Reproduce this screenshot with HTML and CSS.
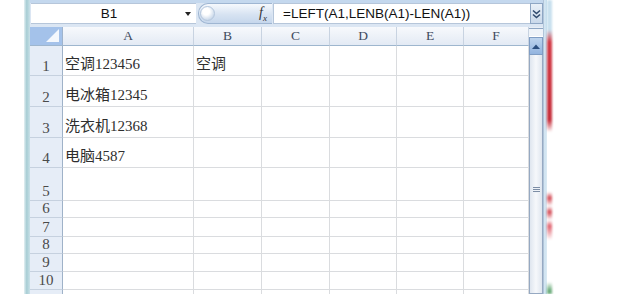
FILE: index.html
```html
<!DOCTYPE html>
<html lang="zh-CN">
<head>
  <meta charset="UTF-8">
  <title>Excel - LEFT / LENB</title>
  <link rel="stylesheet" href="styles.css">
</head>
<body>
  <div class="screen">
    <div class="window">
      <div class="frame-left"></div>
      <div class="app">
        <div class="topbar"></div>
        <div class="formula-bar">
          <div class="name-box"><span class="name">B1</span><span class="drop"></span></div>
          <div class="fx-pill"><span class="knob"></span><span class="fx">f<sub>x</sub></span></div>
          <div class="formula">=LEFT(A1,LENB(A1)-LEN(A1))</div>
          <div class="expand">
            <svg width="9" height="10" viewBox="0 0 9 10"><path d="M1 1.5l3.5 3 3.5-3M1 5.5l3.5 3 3.5-3" fill="none" stroke="#2f4a6e" stroke-width="1.6"/></svg>
          </div>
        </div>
        <div class="sheet">
          <div class="grid">
            <div class="corner"><svg width="13" height="13" viewBox="0 0 13 13"><path d="M13 0V13H0Z" fill="#f4f8fd"/></svg></div>
            <div class="ch">A</div><div class="ch">B</div><div class="ch">C</div><div class="ch">D</div><div class="ch">E</div><div class="ch">F</div>

            <div class="rh">1</div><div class="c">空调123456</div><div class="c">空调</div><div class="c"></div><div class="c"></div><div class="c"></div><div class="c"></div>
            <div class="rh">2</div><div class="c">电冰箱12345</div><div class="c"></div><div class="c"></div><div class="c"></div><div class="c"></div><div class="c"></div>
            <div class="rh">3</div><div class="c">洗衣机12368</div><div class="c"></div><div class="c"></div><div class="c"></div><div class="c"></div><div class="c"></div>
            <div class="rh">4</div><div class="c">电脑4587</div><div class="c"></div><div class="c"></div><div class="c"></div><div class="c"></div><div class="c"></div>
            <div class="rh">5</div><div class="c"></div><div class="c"></div><div class="c"></div><div class="c"></div><div class="c"></div><div class="c"></div>
            <div class="rh">6</div><div class="c"></div><div class="c"></div><div class="c"></div><div class="c"></div><div class="c"></div><div class="c"></div>
            <div class="rh">7</div><div class="c"></div><div class="c"></div><div class="c"></div><div class="c"></div><div class="c"></div><div class="c"></div>
            <div class="rh">8</div><div class="c"></div><div class="c"></div><div class="c"></div><div class="c"></div><div class="c"></div><div class="c"></div>
            <div class="rh">9</div><div class="c"></div><div class="c"></div><div class="c"></div><div class="c"></div><div class="c"></div><div class="c"></div>
            <div class="rh">10</div><div class="c"></div><div class="c"></div><div class="c"></div><div class="c"></div><div class="c"></div><div class="c"></div>
            <div class="rh"></div><div class="c"></div><div class="c"></div><div class="c"></div><div class="c"></div><div class="c"></div><div class="c"></div>
          </div>
          <div class="vscroll">
            <div class="split"></div>
            <div class="up">
              <svg width="8" height="5" viewBox="0 0 8 5"><path d="M0 5L4 0.5 8 5Z" fill="#2c4f80"/></svg>
            </div>
            <div class="thumb"><span class="grip"></span></div>
          </div>
        </div>
      </div>
      <div class="frame-right"></div>
      <div class="spill"></div>
    </div>
  </div>
</body>
</html>
```

FILE: styles.css
```css
body {
  margin: 0;
  background: #fff;
  overflow: hidden;
  height: 294px;
}
.screen {
  height: 294px;
  overflow: hidden;
}
.window {
  display: flex;
  margin-left: 24px;
  height: 294px;
}
.frame-left {
  width: 6px;
  background: linear-gradient(to right, #e4f0f3, #a7cdd4 45%, #c9e1e8);
}
.frame-right {
  width: 4px;
  background: linear-gradient(to right, #9fb4cc, #d6e8f4 40%, #c2dcec);
}
.spill {
  width: 5px;
  background: linear-gradient(to bottom, #c8e0ee 30px, #d23a46 42px, #c52e3b 120px, #fff 132px,
    #fff 192px, #d34a55 198px, #fff 206px, #d34a55 212px, #fff 220px, #e06470 226px, #fff 240px,
    #fff 282px, #6fae7e 290px);
  filter: blur(1px);
}
.app {
  width: 513px;
  display: flex;
  flex-direction: column;
  background: #dbe6f3;
}
.topbar {
  height: 3px;
  background: #c4d8ee;
}
.formula-bar {
  display: flex;
  height: 21px;
  margin-bottom: 3px;
  font-family: "Liberation Sans", Arial, sans-serif;
  font-size: 13.5px;
  color: #111;
}
.name-box {
  display: flex;
  align-items: center;
  width: 165px;
  margin-left: 1px;
  background: #fff;
  border-top: 1px solid #b6c6da;
  border-bottom: 1px solid #b6c6da;
  box-sizing: border-box;
}
.name {
  flex: 1;
  text-align: center;
  padding-left: 6px;
}
.drop {
  width: 0;
  height: 0;
  margin: 0 5px 0 4px;
  border-left: 3px solid transparent;
  border-right: 3px solid transparent;
  border-top: 4px solid #222;
}
.fx-pill {
  display: flex;
  align-items: center;
  width: 74px;
  margin-left: 2px;
  border-radius: 10px 0 0 10px;
  border: 1px solid #9fb6d2;
  border-right: none;
  box-sizing: border-box;
  background: linear-gradient(to bottom, #f6f9fd, #d7e3f2 55%, #c6d7ec);
}
.knob {
  width: 15px;
  height: 15px;
  margin-left: 1px;
  border-radius: 50%;
  background: radial-gradient(circle at 40% 35%, #fff 30%, #c9d8ea 75%);
  border: 1px solid #b4c6dc;
  box-sizing: border-box;
}
.fx {
  margin-left: auto;
  margin-right: 5px;
  font-family: "Liberation Serif", serif;
  font-style: italic;
  font-size: 14px;
  color: #333;
}
.fx sub {
  font-size: 9px;
}
.formula {
  flex: 1;
  margin-left: 1px;
  padding-left: 9px;
  display: flex;
  align-items: center;
  background: #fff;
  border: 1px solid #b6c6da;
  border-right: none;
  box-sizing: border-box;
}
.expand {
  width: 13px;
  display: flex;
  align-items: center;
  justify-content: center;
  background: linear-gradient(to bottom, #e9f0f8, #c9d8ea);
  border: 1px solid #8ea6c4;
  box-sizing: border-box;
}
.sheet {
  flex: 1;
  display: flex;
  overflow: hidden;
}
.grid {
  width: 499px;
  display: grid;
  grid-template-columns: 33px 131px 68px 68px 67px 67px 65px;
  grid-template-rows: 19px 30px 31px 31px 30px 33px 17px 19px 17px 18px 18px 18px;
  background: #fff;
  font-family: "Liberation Serif", "Noto Sans CJK SC", serif;
}
.corner {
  display: flex;
  align-items: flex-end;
  justify-content: flex-end;
  padding: 0 3px 3px 0;
  background: #a4c2ea;
  border-right: 1px solid #9fb4cd;
  border-bottom: 1px solid #9eb6ce;
}
.ch {
  display: flex;
  align-items: center;
  justify-content: center;
  font-size: 13.5px;
  color: #3f4b5e;
  background: linear-gradient(to bottom, #f7f9fc, #e3eaf4);
  border-right: 1px solid #c8d3e1;
  border-bottom: 1px solid #9eb6ce;
}
.rh {
  display: flex;
  align-items: flex-end;
  justify-content: center;
  font-size: 15px;
  line-height: 17px;
  color: #4a4a4a;
  background: #e6edf7;
  border-right: 1px solid #9fb2c8;
  border-bottom: 1px solid #c6d1df;
  box-sizing: border-box;
}
.c {
  display: flex;
  align-items: flex-end;
  padding: 0 0 2px 2px;
  font-size: 15px;
  line-height: 18px;
  color: #2e2e2e;
  border-right: 1px solid #dadcdf;
  border-bottom: 1px solid #dadcdf;
  box-sizing: border-box;
  white-space: nowrap;
}
.vscroll {
  width: 14px;
  display: flex;
  flex-direction: column;
  background: #e8eef6;
}
.split {
  height: 7px;
  margin-top: 1px;
  border-top: 1px solid #8ea6c4;
  border-bottom: 1px solid #fff;
  background: #eef3f9;
}
.up {
  height: 18px;
  display: flex;
  align-items: center;
  justify-content: center;
  background: linear-gradient(to bottom, #bdd4ee, #93b4df);
  border: 1px solid #7f9dc4;
  box-sizing: border-box;
}
.thumb {
  flex: 1;
  display: flex;
  justify-content: center;
  padding-top: 132px;
  background: linear-gradient(to right, #dfe6ef, #f6f8fb 50%, #dfe6ef);
  border: 1px solid #96a9c2;
  border-top: none;
}
.grip {
  width: 7px;
  height: 6px;
  background: repeating-linear-gradient(to bottom, #7d8ea6 0 1px, #eef2f7 1px 2px);
}
```
